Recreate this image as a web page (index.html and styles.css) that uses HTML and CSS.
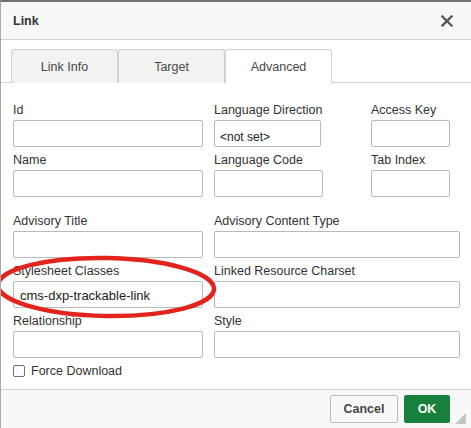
FILE: index.html
```html
<!DOCTYPE html>
<html>
<head>
<meta charset="utf-8">
<link rel="stylesheet" href="styles.css">
</head>
<body>
<div class="dialog">
  <div class="titlebar">
    <span class="title">Link</span>
    <svg class="close" width="12" height="12" viewBox="0 0 12 12"><path d="M1.5 1.5L10.5 10.5M10.5 1.5L1.5 10.5" stroke="#555" stroke-width="2.3" stroke-linecap="square"/></svg>
  </div>
  <div class="body">
    <div class="tabs">
      <div class="tab">Link Info</div>
      <div class="tab">Target</div>
      <div class="tab active">Advanced</div>
    </div>
    <div class="fields">
      <div class="row">
        <div class="field w190"><label>Id</label><div class="input"></div></div>
        <div class="field w107 gap2"><label>Language Direction</label><div class="input select">&lt;not set&gt;</div></div>
        <div class="field w79 gap3a"><label>Access Key</label><div class="input"></div></div>
      </div>
      <div class="row">
        <div class="field w190"><label>Name</label><div class="input"></div></div>
        <div class="field w109 gap2"><label>Language Code</label><div class="input"></div></div>
        <div class="field w79 gap3b"><label>Tab Index</label><div class="input"></div></div>
      </div>
      <div class="row group">
        <div class="field w190"><label>Advisory Title</label><div class="input"></div></div>
        <div class="field w246 gap2"><label>Advisory Content Type</label><div class="input"></div></div>
      </div>
      <div class="row">
        <div class="field w190"><label>Stylesheet Classes</label><div class="input value">cms-dxp-trackable-link</div></div>
        <div class="field w246 gap2"><label>Linked Resource Charset</label><div class="input"></div></div>
      </div>
      <div class="row">
        <div class="field w190"><label>Relationship</label><div class="input"></div></div>
        <div class="field w246 gap2"><label>Style</label><div class="input"></div></div>
      </div>
      <div class="check"><span class="box"></span><span>Force Download</span></div>
    </div>
  </div>
  <div class="footer">
    <div class="btn cancel">Cancel</div>
    <div class="btn ok">OK</div>
    <span class="grip"></span>
  </div>
  <svg class="mark" width="240" height="90" viewBox="0 0 240 90"><ellipse cx="106" cy="43" rx="108" ry="29" transform="rotate(1 106 43)" fill="none" stroke="#e2241c" stroke-width="4.5"/></svg>
</div>
</body>
</html>
```
FILE: styles.css
```css
html, body { margin: 0; padding: 0; background: #fff; }
body { font-family: "Liberation Sans", Arial, sans-serif; color: #333; font-size: 12.5px; }
.dialog {
  position: relative;
  width: 471px; height: 428px; overflow: hidden;
  box-sizing: border-box;
  border-top: 2px solid #747474;
  border-left: 1px solid #a9a9a9;
  display: flex; flex-direction: column;
}
.titlebar {
  height: 38px; box-sizing: border-box;
  background: #f8f8f8;
  border-bottom: 1px solid #d1d1d1;
  display: flex; align-items: center; justify-content: space-between;
  padding: 0 18px 0 12px;
}
.title { font-weight: bold; font-size: 12.5px; color: #333; }
.close { display: block; margin-top: 1px; }
.body { flex: 1; background: #fff; padding-top: 9px; }
.tabs {
  display: flex; padding-left: 10px;
  border-bottom: 1px solid #d1d1d1;
  height: 34px; box-sizing: border-box;
}
.tab {
  width: 107px; height: 34px; box-sizing: border-box;
  border: 1px solid #d1d1d1; border-bottom: none;
  border-radius: 3px 3px 0 0;
  background: #f3f3f3; color: #484848;
  display: flex; align-items: center; justify-content: center;
  font-size: 12.5px;
}
.tab.active { background: #fff; height: 34px; margin-bottom: -1px; }
.fields { padding: 19px 0 0 12px; }
.row { display: flex; margin-bottom: 5px; }
.row.group { margin-top: 16px; }
.field { display: flex; flex-direction: column; }
.field label { height: 16px; line-height: 16px; margin-bottom: 2px; white-space: nowrap; color: #333; }
.w190 { width: 190px; }
.w107 { width: 107px; }
.w109 { width: 109px; }
.w79 { width: 79px; }
.w246 { width: 246px; }
.gap2 { margin-left: 11px; }
.gap3a { margin-left: 50px; }
.gap3b { margin-left: 48px; }
.input {
  height: 27px; box-sizing: border-box;
  border: 1px solid #b9b9b9; border-radius: 2px; background: #fff;
  font-family: "Liberation Sans", Arial, sans-serif; font-size: 13px; color: #222;
}
.input.select { padding: 9px 0 0 5px; font-size: 12px; line-height: 14px; }
.input.value { padding: 0 0 0 6px; line-height: 28px; }
.check { display: flex; align-items: center; margin-top: 2px; height: 16px; }
.check .box {
  width: 12px; height: 12px; box-sizing: border-box;
  border: 1px solid #6f6f6f; border-radius: 2px; background: #fff;
  margin-right: 6px;
}
.footer {
  height: 39px; box-sizing: border-box;
  border-top: 1px solid #d1d1d1; background: #f8f8f8;
  display: flex; justify-content: flex-end; align-items: flex-start;
  padding: 5px 21px 0 0; position: relative;
}
.btn {
  height: 28px; box-sizing: border-box; border-radius: 2px;
  display: flex; align-items: center; justify-content: center;
  font-weight: bold; font-size: 12.5px;
}
.cancel { width: 68px; border: 1px solid #bcbcbc; background: #f8f8f8; color: #474747; margin-right: 6px; }
.ok { width: 46px; background: #17803c; color: #fff; border: 1px solid #17803c; }
.grip {
  position: absolute; right: 5px; bottom: 4px;
  width: 0; height: 0;
  border-left: 11px solid transparent;
  border-bottom: 11px solid #c4c4c4;
}
.mark { position: absolute; left: -1px; top: 242px; pointer-events: none; }
```
